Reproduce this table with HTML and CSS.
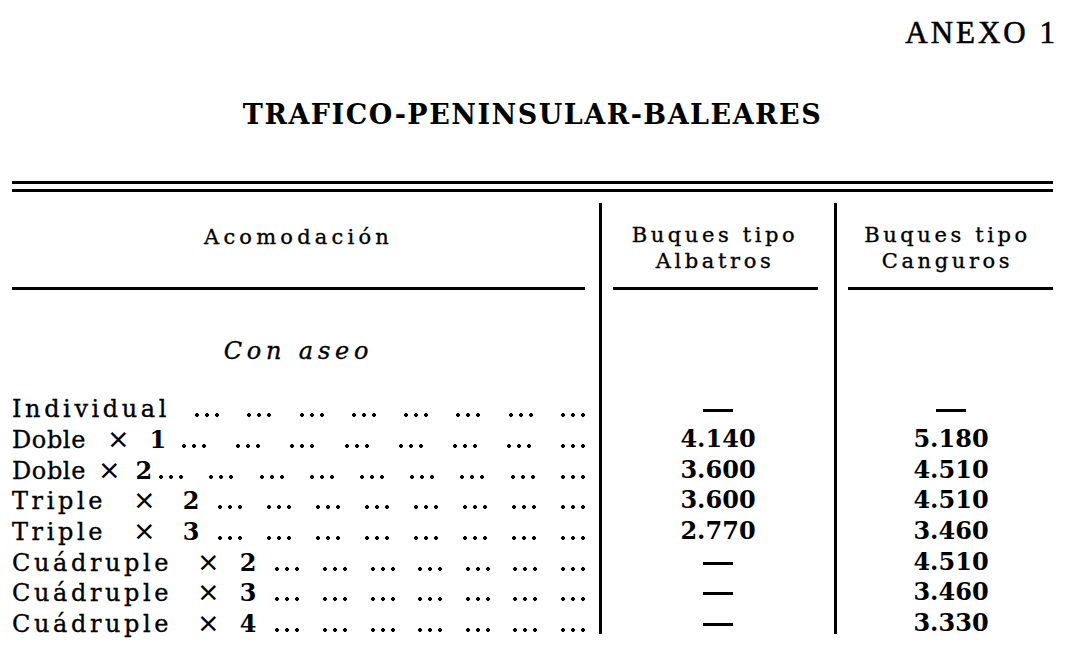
FILE: index.html
```html
<!DOCTYPE html>
<html lang="es">
<head>
<meta charset="utf-8">
<title>Anexo 1 - Tráfico Peninsular-Baleares</title>
<link rel="stylesheet" href="styles.css">
</head>
<body>
<div class="page">
  <div class="annex">ANEXO 1</div>
  <h1 class="title">TRAFICO-PENINSULAR-BALEARES</h1>
  <div class="double-rule"></div>
  <div class="table">
    <div class="row head">
      <div class="cell c1"><div class="htext">Acomodación</div><div class="rule"></div></div>
      <div class="cell c2"><div class="htext">Buques tipo<br>Albatros</div><div class="rule"></div></div>
      <div class="cell c3"><div class="htext">Buques tipo<br>Canguros</div><div class="rule"></div></div>
    </div>
    <div class="row section">
      <div class="cell c1"><em class="sect">Con aseo</em></div>
      <div class="cell c2"></div>
      <div class="cell c3"></div>
    </div>
    <div class="row data">
      <div class="cell c1"><span class="label lbl-single"><span class="name">Individual</span></span><span class="leaders"><i></i><i></i><i></i><i></i><i></i><i></i><i></i><i></i></span></div>
      <div class="cell c2 num"><span class="dash"></span></div>
      <div class="cell c3 num"><span class="dash"></span></div>
    </div>
    <div class="row data">
      <div class="cell c1"><span class="label lbl-tight"><span class="name">Doble</span><span class="x">×</span><span class="n">1</span></span><span class="leaders"><i></i><i></i><i></i><i></i><i></i><i></i><i></i><i></i></span></div>
      <div class="cell c2 num">4.140</div>
      <div class="cell c3 num">5.180</div>
    </div>
    <div class="row data">
      <div class="cell c1"><span class="label lbl-tighter"><span class="name">Doble</span><span class="x">×</span><span class="n">2</span></span><span class="leaders"><i></i><i></i><i></i><i></i><i></i><i></i><i></i><i></i><i></i></span></div>
      <div class="cell c2 num">3.600</div>
      <div class="cell c3 num">4.510</div>
    </div>
    <div class="row data">
      <div class="cell c1"><span class="label lbl-wide"><span class="name">Triple</span><span class="x">×</span><span class="n">2</span></span><span class="leaders"><i></i><i></i><i></i><i></i><i></i><i></i><i></i><i></i></span></div>
      <div class="cell c2 num">3.600</div>
      <div class="cell c3 num">4.510</div>
    </div>
    <div class="row data">
      <div class="cell c1"><span class="label lbl-wide"><span class="name">Triple</span><span class="x">×</span><span class="n">3</span></span><span class="leaders"><i></i><i></i><i></i><i></i><i></i><i></i><i></i><i></i></span></div>
      <div class="cell c2 num">2.770</div>
      <div class="cell c3 num">3.460</div>
    </div>
    <div class="row data">
      <div class="cell c1"><span class="label"><span class="name">Cuádruple</span><span class="x">×</span><span class="n">2</span></span><span class="leaders"><i></i><i></i><i></i><i></i><i></i><i></i><i></i></span></div>
      <div class="cell c2 num"><span class="dash"></span></div>
      <div class="cell c3 num">4.510</div>
    </div>
    <div class="row data">
      <div class="cell c1"><span class="label"><span class="name">Cuádruple</span><span class="x">×</span><span class="n">3</span></span><span class="leaders"><i></i><i></i><i></i><i></i><i></i><i></i><i></i></span></div>
      <div class="cell c2 num"><span class="dash"></span></div>
      <div class="cell c3 num">3.460</div>
    </div>
    <div class="row data">
      <div class="cell c1"><span class="label"><span class="name">Cuádruple</span><span class="x">×</span><span class="n">4</span></span><span class="leaders"><i></i><i></i><i></i><i></i><i></i><i></i><i></i></span></div>
      <div class="cell c2 num"><span class="dash"></span></div>
      <div class="cell c3 num">3.330</div>
    </div>
  </div>
</div>
</body>
</html>
```
FILE: styles.css
```css
* { box-sizing: border-box; }
html, body { margin: 0; background: #fff; }
body { font-family: "DejaVu Serif", "Liberation Serif", serif; color: #000; }

.page { width: 1085px; padding: 15px 32px 20px 12px; }

.annex {
  font-family: "Liberation Serif", serif;
  font-size: 31px;
  line-height: 36px;
  letter-spacing: 3px;
  text-align: right;
  margin-right: -5px;
  -webkit-text-stroke: 0.6px #000;
}

.title {
  margin: 46px 0 0;
  font-size: 27px;
  font-weight: bold;
  line-height: 36px;
  letter-spacing: 1.5px;
  text-align: center;
}

.double-rule {
  margin-top: 48px;
  height: 11px;
  border-top: 3px solid #000;
  border-bottom: 3px solid #000;
}

.table { margin-top: 11px; }

.row { display: grid; grid-template-columns: 587px 235px 219px; }
.cell + .cell { border-left: 3px solid #000; }

/* header */
.head { height: 87px; }
.head .cell { display: flex; flex-direction: column; padding-top: 19px; }
.htext {
  font-size: 21px;
  line-height: 26px;
  letter-spacing: 3.6px;
  text-align: center;
  -webkit-text-stroke: 0.35px #000;
}
.head .c1 .htext { padding-top: 2px; padding-right: 14px; letter-spacing: 4.2px; }
.head .c2 .htext { padding-right: 6px; }
.head .c3 .htext { padding-left: 5px; }
.rule { margin-top: auto; height: 3px; background: #000; }
.head .c1 .rule { margin-right: 14px; }
.head .c2 .rule { margin-left: 11px; margin-right: 16px; }
.head .c3 .rule { margin-left: 11px; }

/* section */
.section .c1 { padding: 46px 14px 22px 0; text-align: center; }
.sect {
  font-size: 24px;
  line-height: 30.6px;
  letter-spacing: 4.8px;
  -webkit-text-stroke: 0.35px #000;
}

/* data rows */
.data { height: 30.6px; font-size: 24px; line-height: 20px; }
.data .cell { padding-top: 10px; }
.data .c1 { display: flex; align-items: baseline; padding-right: 11px; white-space: nowrap; }
.label { -webkit-text-stroke: 0.35px #000; }
.name { letter-spacing: 3.6px; }
.x {
  font-family: "DejaVu Sans", sans-serif;
  font-size: 27px;
  margin-left: 25px;
  -webkit-text-stroke: 0;
}
.n { font-weight: bold; margin-left: 20px; -webkit-text-stroke: 0; }
.lbl-tight .name,
.lbl-tighter .name { letter-spacing: 0.6px; }
.lbl-tight .x { margin-left: 21px; }
.lbl-tighter .x { margin-left: 12px; }
.lbl-tighter .n { margin-left: 15px; }
.lbl-wide .x { margin-left: 27px; }
.lbl-wide .n { margin-left: 27px; }

.leaders {
  flex: 1;
  display: flex;
  justify-content: space-between;
  margin-left: 16px;
}
.lbl-single + .leaders { margin-left: 22px; }
.lbl-tight + .leaders { margin-left: 13px; }
.lbl-tighter + .leaders { margin-left: 4px; }
.leaders i {
  display: inline-block;
  width: 30px;
  height: 4px;
  margin-bottom: -1px;
  background: radial-gradient(circle, #000 1.6px, transparent 2.2px) 0 0 / 10px 4px repeat-x;
}

.num { text-align: center; font-weight: bold; }
.c3.num { padding-left: 12px; }
.dash {
  display: inline-block;
  width: 30px;
  height: 3px;
  background: #000;
  vertical-align: baseline;
  margin-bottom: 5px;
}
```
